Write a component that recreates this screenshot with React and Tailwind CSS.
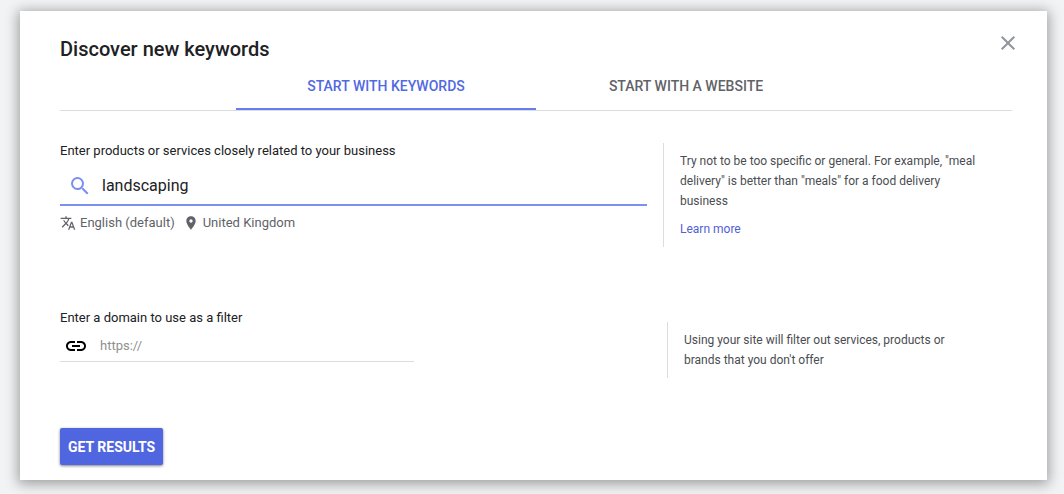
import {useState} from "react";
import {MdClose, MdLink, MdPlace, MdSearch, MdTranslate} from "react-icons/md";

const TABS = [
    {id: "keywords", label: "START WITH KEYWORDS"},
    {id: "website", label: "START WITH A WEBSITE"},
];

function Tabs({active, onChange}) {
    return (
        <div role="tablist" className="flex justify-center border-b border-[#dadce0]">
            {TABS.map((tab) => (
                <button
                    key={tab.id}
                    type="button"
                    role="tab"
                    aria-selected={active === tab.id}
                    onClick={() => onChange(tab.id)}
                    className={`w-[300px] h-[47px] border-b-2 text-sm font-medium cursor-pointer ${
                        active === tab.id
                            ? "border-[#667eea] text-[#5169e2]"
                            : "border-transparent text-[#5f6368]"
                    }`}>
                    {tab.label}
                </button>
            ))}
        </div>
    );
}

function Hint({children, className}) {
    return (
        <aside className={`shrink-0 border-l border-[#dadce0] py-2 pr-8 pl-4 text-xs leading-5 text-[#4a4d51] ${className}`}>
            {children}
        </aside>
    );
}

export default function App() {
    const [tab, setTab] = useState("keywords");
    const [keyword, setKeyword] = useState("landscaping");
    const [domain, setDomain] = useState("");

    return (
        <div className="min-h-screen bg-[#f1f3f4] pt-[11px] pr-[17px] pb-[14px] pl-5 font-[Roboto,sans-serif]">
            <main className="bg-white pt-6 pr-[35px] pb-[15px] pl-10 shadow-[0_2px_12px_2px_rgba(0,0,0,0.35)]">
                <header className="flex items-start justify-between">
                    <h1 className="text-xl leading-7 font-medium text-[#202124]">Discover new keywords</h1>
                    <button type="button" aria-label="Close" className="-mt-1 -mr-2 text-[#8f959c] cursor-pointer">
                        <MdClose size={24}/>
                    </button>
                </header>

                <Tabs active={tab} onChange={setTab}/>

                <form onSubmit={(e) => e.preventDefault()}>
                    <section className="mt-8 flex gap-4">
                        <div className="min-w-0 flex-1">
                            <label htmlFor="keyword" className="block text-[13px] leading-4 text-[#202124]">
                                Enter products or services closely related to your business
                            </label>
                            <div className="mt-2 flex h-[39px] items-center gap-2 border-b-2 border-[#7b8ff0] pl-2">
                                <MdSearch size={24} className="shrink-0 text-[#7b8ff0]"/>
                                <input
                                    id="keyword"
                                    type="text"
                                    value={keyword}
                                    onChange={(e) => setKeyword(e.target.value)}
                                    className="min-w-0 flex-1 pl-[2px] text-base text-[#202124] outline-none"/>
                            </div>
                            <div className="mt-[7px] flex gap-2 text-[13px] leading-5 text-[#5f6368]">
                                <button type="button" className="flex items-center gap-1 cursor-pointer">
                                    <MdTranslate size={16}/>
                                    English (default)
                                </button>
                                <button type="button" className="flex items-center gap-1 cursor-pointer">
                                    <MdPlace size={16}/>
                                    United Kingdom
                                </button>
                            </div>
                        </div>
                        <Hint className="w-[349px]">
                            <p>
                                Try not to be too specific or general. For example, "meal delivery" is better than
                                "meals" for a food delivery business
                            </p>
                            <a href="#" className="mt-2 block text-[#5160d6]">Learn more</a>
                        </Hint>
                    </section>

                    <section className="mt-[63px] flex items-start justify-between gap-4">
                        <div className="w-[354px]">
                            <label htmlFor="domain" className="block text-[13px] leading-4 text-[#202124]">
                                Enter a domain to use as a filter
                            </label>
                            <div className="mt-1 flex h-8 items-center gap-3 border-b border-[#dadce0] pl-1">
                                <MdLink size={24} className="shrink-0 text-black"/>
                                <input
                                    id="domain"
                                    type="text"
                                    placeholder="https://"
                                    value={domain}
                                    onChange={(e) => setDomain(e.target.value)}
                                    className="min-w-0 flex-1 text-[13px] text-[#202124] outline-none placeholder:text-[#909090]"/>
                            </div>
                        </div>
                        <Hint className="mt-3 w-[345px]">
                            <p>Using your site will filter out services, products or brands that you don't offer</p>
                        </Hint>
                    </section>

                    <button
                        type="submit"
                        className="mt-[50px] h-[37px] rounded-xs bg-[#5065e0] px-2 text-sm font-bold text-white shadow-[0_1px_3px_rgba(0,0,0,0.5)] cursor-pointer">
                        GET RESULTS
                    </button>
                </form>
            </main>
        </div>
    );
}
